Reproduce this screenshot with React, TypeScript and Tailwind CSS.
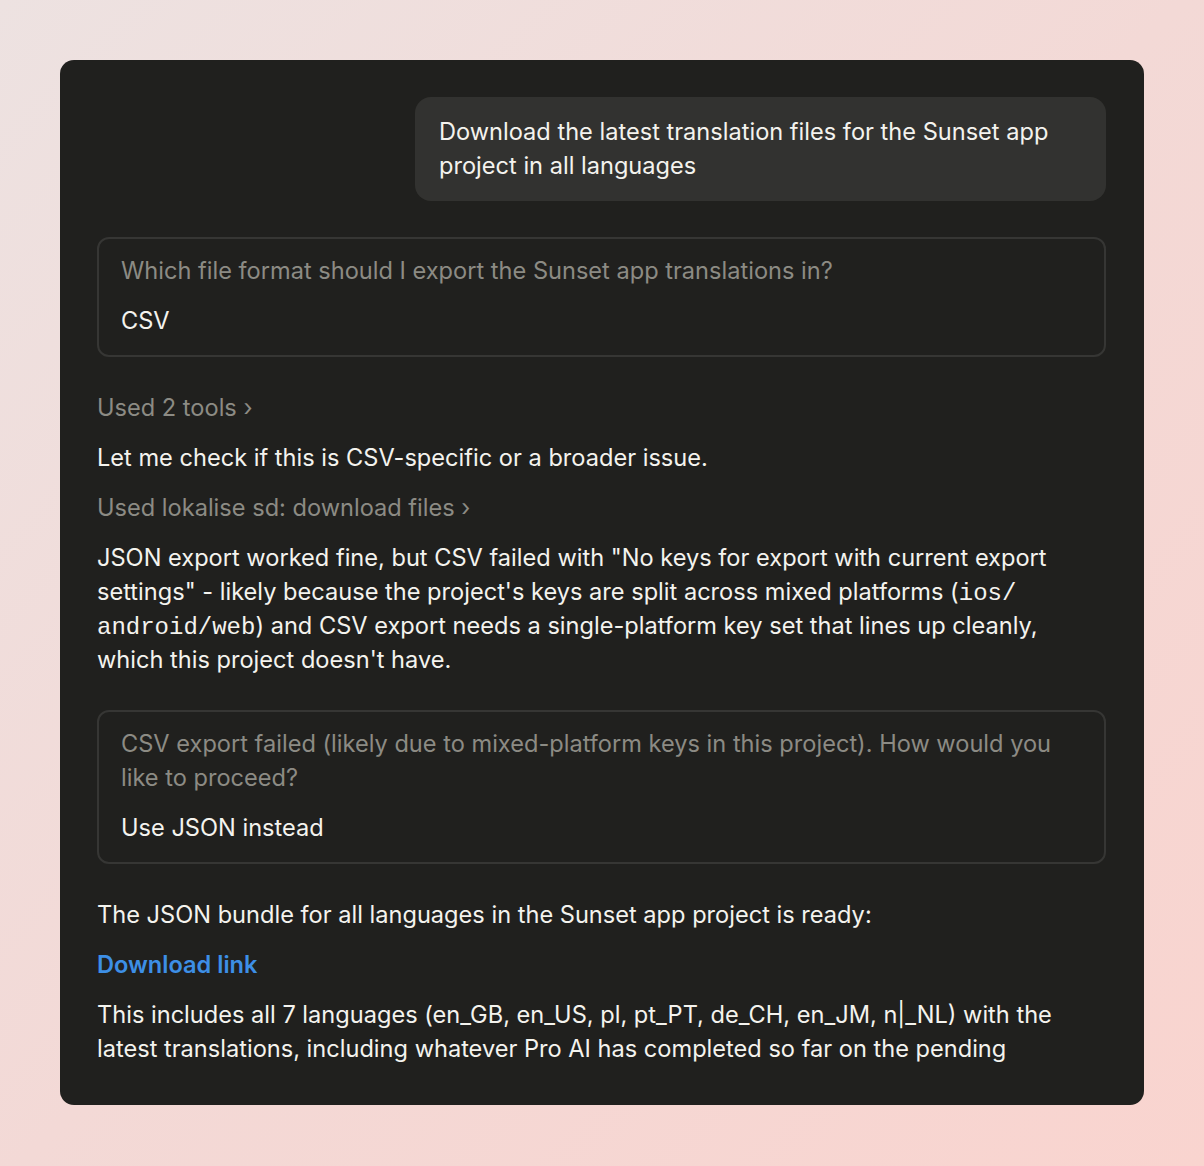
import React from 'react';

function ToolLine({ label }: { label: string }) {
  return (
    <p className="text-[#8c8b84]">
      {label} ›
    </p>
  );
}

function AnswerBox({ question, answer }: { question: React.ReactNode; answer: string }) {
  return (
    <div className="rounded-[12px] border-2 border-[#363634] px-[22px] pt-[15px] pb-[17px]">
      <p className="text-[#8c8b84]">{question}</p>
      <p className="mt-[16px] text-[#f4f3ee]">{answer}</p>
    </div>
  );
}

const mono = "font-['Liberation_Mono',monospace] text-[24px] leading-none";

export default function App() {
  return (
    <div className="min-h-screen w-full bg-[linear-gradient(135deg,#ede2e1_0%,#f3d9d6_50%,#f9d4cf_100%)] p-[60px] font-['Inter',sans-serif]">
      <div className="rounded-[14px] bg-[#20201e] pl-[37px] pr-[38px] pt-[37px] pb-[39px] text-[23.6px] leading-[34px] text-[#f4f3ee]">
        {/* User message */}
        <div className="flex justify-end">
          <div className="w-[691px] rounded-[16px] bg-[#323230] px-[24px] py-[18px]">
            Download the latest translation files for the Sunset app
            <br />
            project in all languages
          </div>
        </div>

        <div className="mt-[36px]">
          <AnswerBox
            question="Which file format should I export the Sunset app translations in?"
            answer="CSV"
          />
        </div>

        <div className="mt-[34px] flex flex-col gap-[16px]">
          <ToolLine label="Used 2 tools" />
          <p>Let me check if this is CSV-specific or a broader issue.</p>
          <ToolLine label="Used lokalise sd: download files" />
          <p>
            JSON export worked fine, but CSV failed with "No keys for export with current export
            <br />
            settings" - likely because the project's keys are split across mixed platforms (
            <code className={mono}>ios/</code>
            <br />
            <code className={mono}>android/web</code>) and CSV export needs a single-platform key set that lines up cleanly,
            <br />
            which this project doesn't have.
          </p>
        </div>

        <div className="mt-[33px]">
          <AnswerBox
            question={
              <>
                CSV export failed (likely due to mixed-platform keys in this project). How would you
                <br />
                like to proceed?
              </>
            }
            answer="Use JSON instead"
          />
        </div>

        <div className="mt-[34px] flex flex-col gap-[16px]">
          <p>The JSON bundle for all languages in the Sunset app project is ready:</p>
          <p>
            <a className="font-semibold text-[#3d8fe6]">Download link</a>
          </p>
          <p>
            This includes all 7 languages (en_GB, en_US, pl, pt_PT, de_CH, en_JM, n|_NL) with the
            <br />
            latest translations, including whatever Pro AI has completed so far on the pending
          </p>
        </div>
      </div>
    </div>
  );
}
